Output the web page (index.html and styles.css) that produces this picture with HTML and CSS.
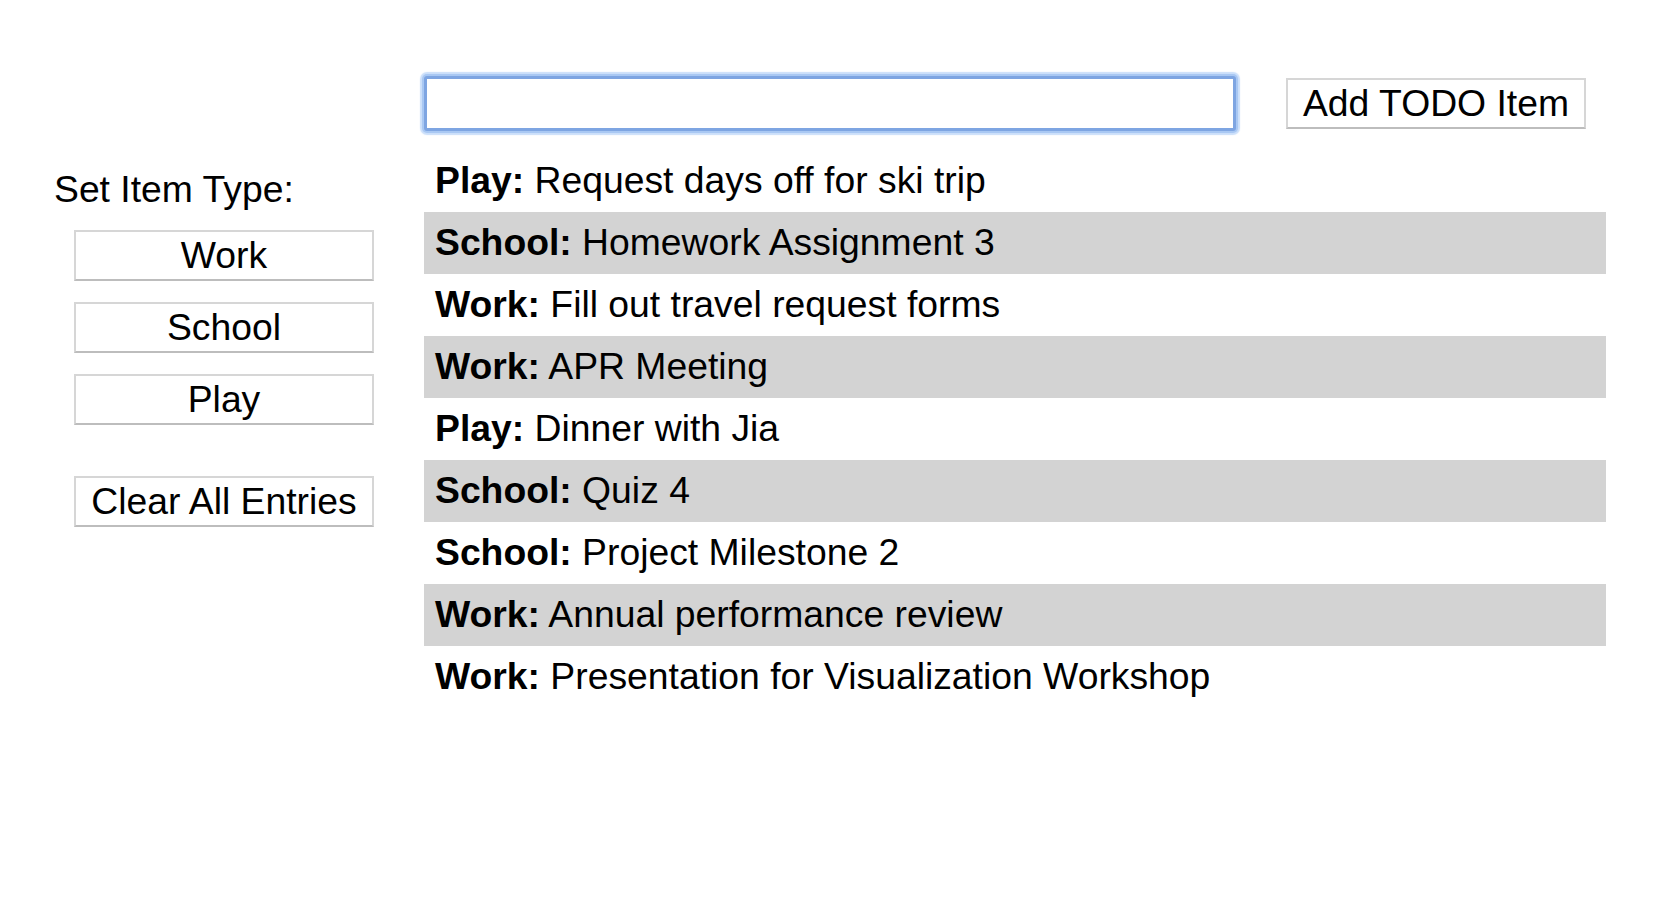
FILE: index.html
```html
<!DOCTYPE html>
<html lang="en">
<head>
<meta charset="utf-8">
<title>TODO List</title>
<link rel="stylesheet" href="styles.css">
</head>
<body>
<div class="page">
  <aside class="sidebar">
    <div class="type-label">Set Item Type:</div>
    <div class="type-buttons">
      <button class="btn">Work</button>
      <button class="btn">School</button>
      <button class="btn">Play</button>
    </div>
    <button class="btn clear">Clear All Entries</button>
  </aside>
  <main class="main">
    <div class="entry">
      <input class="todo-input" type="text">
      <button class="btn add">Add TODO Item</button>
    </div>
    <ul class="todo-list">
      <li class="todo"><b>Play:</b> Request days off for ski trip</li>
      <li class="todo"><b>School:</b> Homework Assignment 3</li>
      <li class="todo"><b>Work:</b> Fill out travel request forms</li>
      <li class="todo"><b>Work:</b> APR Meeting</li>
      <li class="todo"><b>Play:</b> Dinner with Jia</li>
      <li class="todo"><b>School:</b> Quiz 4</li>
      <li class="todo"><b>School:</b> Project Milestone 2</li>
      <li class="todo"><b>Work:</b> Annual performance review</li>
      <li class="todo"><b>Work:</b> Presentation for Visualization Workshop</li>
    </ul>
  </main>
</div>
</body>
</html>
```
FILE: styles.css
```css
html, body {
  margin: 0;
  padding: 0;
  background: #ffffff;
}

body {
  font-family: "Liberation Sans", Arial, Helvetica, sans-serif;
  font-size: 37.3px;
  color: #000000;
}

.page {
  display: flex;
  align-items: flex-start;
}

.sidebar {
  width: 370px;
  padding-left: 54px;
  padding-top: 168px;
  display: flex;
  flex-direction: column;
}

.type-label {
  line-height: 42px;
  height: 42px;
  margin-bottom: 20px;
}

.type-buttons {
  display: flex;
  flex-direction: column;
  gap: 21px;
}

.btn {
  font-family: "Liberation Sans", Arial, Helvetica, sans-serif;
  font-size: 37.3px;
  color: #000000;
  background: #ffffff;
  width: 300px;
  height: 51px;
  padding: 0;
  margin: 0;
  border: 2px solid #d6d6d6;
  border-bottom-color: #bdbdbd;
  border-radius: 0;
  line-height: 1;
  box-sizing: border-box;
}

.sidebar .btn {
  margin-left: 20px;
}

.sidebar .clear {
  margin-top: 51px;
}

.main {
  flex: 1;
  display: flex;
  flex-direction: column;
}

.entry {
  display: flex;
  align-items: center;
  gap: 50px;
  padding-top: 76px;
}

.todo-input {
  box-sizing: border-box;
  width: 812px;
  height: 55px;
  margin: 0;
  padding: 0 8px;
  font-family: "Liberation Sans", Arial, Helvetica, sans-serif;
  font-size: 37.3px;
  background: #ffffff;
  border: 3px solid #7ea5e2;
  border-radius: 3px;
  box-shadow: 0 0 0 2px #a9c8f3, 0 0 1px 4px rgba(160, 196, 245, 0.55);
  outline: none;
}

.todo-list {
  list-style: none;
  margin: 19px 0 0 0;
  padding: 0;
  width: 1182px;
}

.todo {
  height: 60px;
  line-height: 60px;
  padding: 0 0 2px 11px;
  white-space: nowrap;
}

.todo:nth-child(even) {
  background: #d3d3d3;
}

.todo b {
  font-weight: bold;
}
```
